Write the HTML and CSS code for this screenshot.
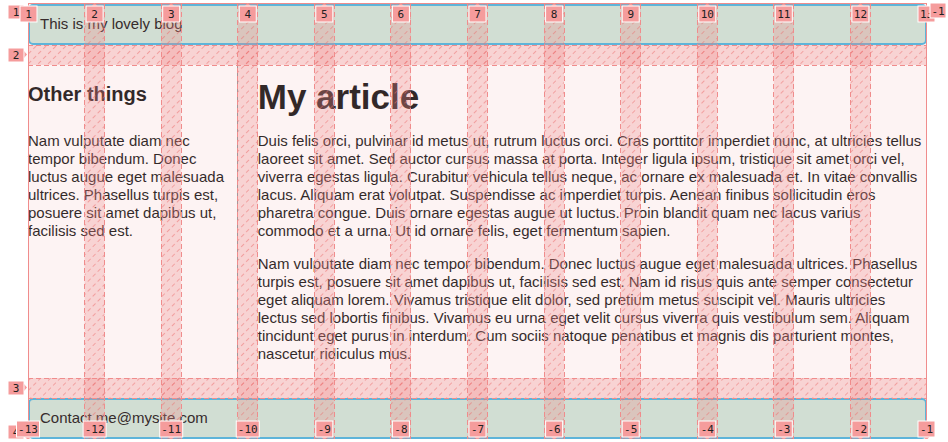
FILE: index.html
```html
<!DOCTYPE html>
<html lang="en">
<head>
<meta charset="utf-8">
<title>Blog grid</title>
<link rel="stylesheet" href="styles.css">
</head>
<body>
<div class="wrapper">
  <header class="main-head">This is my lovely blog</header>
  <aside class="side">
    <h2>Other things</h2>
    <p>Nam vulputate diam nec tempor bibendum. Donec luctus augue eget malesuada ultrices. Phasellus turpis est, posuere sit amet dapibus ut, facilisis sed est.</p>
  </aside>
  <article class="content">
    <h1>My article</h1>
    <p>Duis felis orci, pulvinar id metus ut, rutrum luctus orci. Cras porttitor imperdiet nunc, at ultricies tellus laoreet sit amet. Sed auctor cursus massa at porta. Integer ligula ipsum, tristique sit amet orci vel, viverra egestas ligula. Curabitur vehicula tellus neque, ac ornare ex malesuada et. In vitae convallis lacus. Aliquam erat volutpat. Suspendisse ac imperdiet turpis. Aenean finibus sollicitudin eros pharetra congue. Duis ornare egestas augue ut luctus. Proin blandit quam nec lacus varius commodo et a urna. Ut id ornare felis, eget fermentum sapien.</p>
    <p>Nam vulputate diam nec tempor bibendum. Donec luctus augue eget malesuada ultrices. Phasellus turpis est, posuere sit amet dapibus ut, facilisis sed est. Nam id risus quis ante semper consectetur eget aliquam lorem. Vivamus tristique elit dolor, sed pretium metus suscipit vel. Mauris ultricies lectus sed lobortis finibus. Vivamus eu urna eget velit cursus viverra quis vestibulum sem. Aliquam tincidunt eget purus in interdum. Cum sociis natoque penatibus et magnis dis parturient montes, nascetur ridiculus mus.</p>
  </article>
  <footer class="main-footer">Contact me@mysite.com</footer>

  <svg class="grid-overlay" width="899" height="435" xmlns="http://www.w3.org/2000/svg">
    <defs>
      <pattern id="hatch" width="7" height="7" patternUnits="userSpaceOnUse" patternTransform="rotate(-45)">
        <line x1="0" y1="0.5" x2="4" y2="0.5" stroke="rgba(235,110,110,0.5)" stroke-width="1"/>
      </pattern>
      <g id="gaps">
        <rect x="56.58" y="0" width="20" height="435"/>
        <rect x="133.17" y="0" width="20" height="435"/>
        <rect x="209.75" y="0" width="20" height="435"/>
        <rect x="286.33" y="0" width="20" height="435"/>
        <rect x="362.92" y="0" width="20" height="435"/>
        <rect x="439.5" y="0" width="20" height="435"/>
        <rect x="516.08" y="0" width="20" height="435"/>
        <rect x="592.67" y="0" width="20" height="435"/>
        <rect x="669.25" y="0" width="20" height="435"/>
        <rect x="745.83" y="0" width="20" height="435"/>
        <rect x="822.42" y="0" width="20" height="435"/>
        <rect x="0" y="41" width="899" height="20"/>
        <rect x="0" y="374" width="899" height="20"/>
      </g>
    </defs>
    <rect x="0" y="0" width="899" height="435" fill="rgba(240,140,140,0.1)"/>
    <use href="#gaps" fill="rgba(240,140,140,0.3)"/>
    <use href="#gaps" fill="url(#hatch)"/>
    <g stroke="rgb(240,140,140)" stroke-width="1" stroke-dasharray="5 3" fill="none">
      <line x1="56.5" y1="0" x2="56.5" y2="435"/><line x1="76.5" y1="0" x2="76.5" y2="435"/>
      <line x1="133.5" y1="0" x2="133.5" y2="435"/><line x1="153.5" y1="0" x2="153.5" y2="435"/>
      <line x1="209.5" y1="0" x2="209.5" y2="435"/><line x1="229.5" y1="0" x2="229.5" y2="435"/>
      <line x1="286.5" y1="0" x2="286.5" y2="435"/><line x1="306.5" y1="0" x2="306.5" y2="435"/>
      <line x1="362.5" y1="0" x2="362.5" y2="435"/><line x1="382.5" y1="0" x2="382.5" y2="435"/>
      <line x1="439.5" y1="0" x2="439.5" y2="435"/><line x1="459.5" y1="0" x2="459.5" y2="435"/>
      <line x1="516.5" y1="0" x2="516.5" y2="435"/><line x1="536.5" y1="0" x2="536.5" y2="435"/>
      <line x1="592.5" y1="0" x2="592.5" y2="435"/><line x1="612.5" y1="0" x2="612.5" y2="435"/>
      <line x1="669.5" y1="0" x2="669.5" y2="435"/><line x1="689.5" y1="0" x2="689.5" y2="435"/>
      <line x1="745.5" y1="0" x2="745.5" y2="435"/><line x1="765.5" y1="0" x2="765.5" y2="435"/>
      <line x1="822.5" y1="0" x2="822.5" y2="435"/><line x1="842.5" y1="0" x2="842.5" y2="435"/>
      <line x1="0" y1="41.5" x2="899" y2="41.5"/><line x1="0" y1="61.5" x2="899" y2="61.5"/>
      <line x1="0" y1="374.5" x2="899" y2="374.5"/><line x1="0" y1="394.5" x2="899" y2="394.5"/>
    </g>
    <rect x="0.5" y="-0.5" width="898" height="436" fill="none" stroke="rgb(240,140,140)" stroke-width="1"/>

    <g class="lbl">
      <polygon points="-4,4 -1,7.5 -4,11"/><rect x="-20" y="1" width="16" height="14"/><text x="-12" y="8.5">1</text>
      <polygon points="-4,47 -1,50.5 -4,54"/><rect x="-20" y="44" width="16" height="14"/><text x="-12" y="51.5">2</text>
      <polygon points="-4,380 -1,383.5 -4,387"/><rect x="-20" y="377" width="16" height="14"/><text x="-12" y="384.5">3</text>
      <polygon points="-4,424 -1,427.5 -4,431"/><rect x="-20" y="421" width="16" height="14"/><text x="-12" y="428.5">4</text>
    </g>
    <g class="lbl">
      <rect x="-8" y="2" width="17" height="16"/><text x="0.5" y="10.5">1</text>
      <polygon points="63.6,2 66.6,-1 69.6,2"/><rect x="58.1" y="2" width="17" height="16"/><text x="66.6" y="10.5">2</text>
      <polygon points="140.2,2 143.2,-1 146.2,2"/><rect x="134.7" y="2" width="17" height="16"/><text x="143.2" y="10.5">3</text>
      <polygon points="216.75,2 219.75,-1 222.75,2"/><rect x="211.25" y="2" width="17" height="16"/><text x="219.75" y="10.5">4</text>
      <polygon points="293.3,2 296.3,-1 299.3,2"/><rect x="287.8" y="2" width="17" height="16"/><text x="296.3" y="10.5">5</text>
      <polygon points="369.9,2 372.9,-1 375.9,2"/><rect x="364.4" y="2" width="17" height="16"/><text x="372.9" y="10.5">6</text>
      <polygon points="446.5,2 449.5,-1 452.5,2"/><rect x="441" y="2" width="17" height="16"/><text x="449.5" y="10.5">7</text>
      <polygon points="523.1,2 526.1,-1 529.1,2"/><rect x="517.6" y="2" width="17" height="16"/><text x="526.1" y="10.5">8</text>
      <polygon points="599.7,2 602.7,-1 605.7,2"/><rect x="594.2" y="2" width="17" height="16"/><text x="602.7" y="10.5">9</text>
      <polygon points="676.25,2 679.25,-1 682.25,2"/><rect x="670.75" y="2" width="17" height="16"/><text x="679.25" y="10.5">10</text>
      <polygon points="752.8,2 755.8,-1 758.8,2"/><rect x="747.3" y="2" width="17" height="16"/><text x="755.8" y="10.5">11</text>
      <polygon points="829.4,2 832.4,-1 835.4,2"/><rect x="823.9" y="2" width="17" height="16"/><text x="832.4" y="10.5">12</text>
      <rect x="890" y="2" width="17" height="16"/><text x="898.5" y="10.5">13</text>
      <polygon points="902,3 899,6.5 902,10"/><rect x="902" y="-1" width="16" height="15"/><text x="910" y="7">-1</text>
    </g>
    <g class="lbl">
      <polygon points="-3,433 0,436 3,433"/><rect x="-11.5" y="417" width="23" height="16"/><text x="0" y="425.5">-13</text>
      <polygon points="63.6,433 66.6,436 69.6,433"/><rect x="55.1" y="417" width="23" height="16"/><text x="66.6" y="425.5">-12</text>
      <polygon points="140.2,433 143.2,436 146.2,433"/><rect x="131.7" y="417" width="23" height="16"/><text x="143.2" y="425.5">-11</text>
      <polygon points="216.75,433 219.75,436 222.75,433"/><rect x="208.25" y="417" width="23" height="16"/><text x="219.75" y="425.5">-10</text>
      <polygon points="293.3,433 296.3,436 299.3,433"/><rect x="287.8" y="417" width="17" height="16"/><text x="296.3" y="425.5">-9</text>
      <polygon points="369.9,433 372.9,436 375.9,433"/><rect x="364.4" y="417" width="17" height="16"/><text x="372.9" y="425.5">-8</text>
      <polygon points="446.5,433 449.5,436 452.5,433"/><rect x="441" y="417" width="17" height="16"/><text x="449.5" y="425.5">-7</text>
      <polygon points="523.1,433 526.1,436 529.1,433"/><rect x="517.6" y="417" width="17" height="16"/><text x="526.1" y="425.5">-6</text>
      <polygon points="599.7,433 602.7,436 605.7,433"/><rect x="594.2" y="417" width="17" height="16"/><text x="602.7" y="425.5">-5</text>
      <polygon points="676.25,433 679.25,436 682.25,433"/><rect x="670.75" y="417" width="17" height="16"/><text x="679.25" y="425.5">-4</text>
      <polygon points="752.8,433 755.8,436 758.8,433"/><rect x="747.3" y="417" width="17" height="16"/><text x="755.8" y="425.5">-3</text>
      <polygon points="829.4,433 832.4,436 835.4,433"/><rect x="823.9" y="417" width="17" height="16"/><text x="832.4" y="425.5">-2</text>
      <polygon points="895.5,433 898.5,436 901.5,433"/><rect x="890" y="417" width="17" height="16"/><text x="898.5" y="425.5">-1</text>
    </g>
  </svg>
</div>
</body>
</html>
```

FILE: styles.css
```css
html, body {
  margin: 0;
  padding: 0;
  background: #ffffff;
}

body {
  font-family: "Liberation Sans", Arial, sans-serif;
  font-size: 15px;
  line-height: 18px;
  color: #1d1d1d;
}

.wrapper {
  position: relative;
  display: grid;
  grid-template-columns: repeat(12, minmax(0, 1fr));
  column-gap: 20px;
  row-gap: 20px;
  width: 899px;
  margin: 4px 0 0 28px;
}

.main-head,
.main-footer {
  grid-column: 1 / -1;
  background: rgb(207, 232, 220);
  border: 2px solid rgb(79, 185, 227);
  border-radius: 5px;
  padding: 9px 10px 10px;
  color: #222222;
}

.side {
  grid-column: 1 / 4;
  border-right: 1px solid #9a9a9a;
}

.content {
  grid-column: 4 / -1;
}

.side h2 {
  font-size: 20px;
  line-height: 23px;
  font-weight: bold;
  margin: 18px 0 26px;
}

.content h1 {
  font-size: 35px;
  line-height: 40px;
  font-weight: bold;
  margin: 12px 0 15px;
}

.side p,
.content p {
  margin: 0 0 15px;
}

.grid-overlay {
  position: absolute;
  left: 0;
  top: 0;
  overflow: visible;
  pointer-events: none;
}

.lbl rect,
.lbl polygon {
  fill: #f59c9c;
  stroke: #ffffff;
  stroke-width: 1;
}

.lbl polygon {
  stroke: none;
}

.lbl text {
  font-family: "DejaVu Sans Mono", "Liberation Mono", monospace;
  font-size: 11px;
  fill: #222222;
  text-anchor: middle;
  dominant-baseline: central;
}
```
